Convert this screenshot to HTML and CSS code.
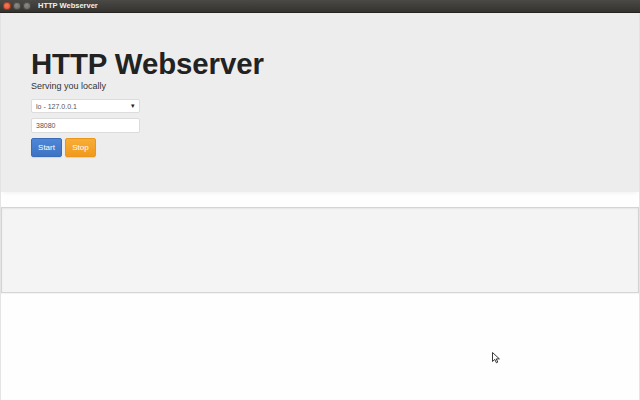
FILE: index.html
```html
<!DOCTYPE html>
<html>
<head>
<meta charset="utf-8">
<title>HTTP Webserver</title>
<link rel="stylesheet" href="styles.css">
</head>
<body>
<div class="window">
  <div class="titlebar">
    <div class="controls">
      <span class="dot close"></span>
      <span class="dot min"></span>
      <span class="dot max"></span>
    </div>
    <span class="wtitle">HTTP Webserver</span>
  </div>
  <div class="content">
    <div class="jumbotron">
      <h1 class="title">HTTP Webserver</h1>
      <p class="lead">Serving you locally</p>
      <div class="select">
        <span>lo - 127.0.0.1</span>
        <span class="caret">▾</span>
      </div>
      <div class="input">38080</div>
      <div class="buttons">
        <button class="btn btn-start">Start</button>
        <button class="btn btn-stop">Stop</button>
      </div>
    </div>
    <div class="spacer"></div>
    <div class="well"></div>
  </div>
  <svg class="cursor" width="9" height="12" viewBox="0 0 9 12">
    <path d="M0.5 0.5 L0.5 9.5 L2.8 7.4 L4.4 10.8 L5.8 10.1 L4.3 6.9 L7.4 6.9 Z" fill="#fff" stroke="#222" stroke-width="0.9" stroke-linejoin="round"/>
  </svg>
</div>
</body>
</html>
```

FILE: styles.css
```css
html, body {
  margin: 0;
  padding: 0;
  background: #fefefe;
}
.window {
  position: relative;
  width: 640px;
  height: 400px;
  overflow: hidden;
  display: flex;
  flex-direction: column;
  font-family: "Liberation Sans", Arial, sans-serif;
}
.titlebar {
  height: 13px;
  flex: 0 0 13px;
  background: linear-gradient(#4a4945, #34332f);
  display: flex;
  align-items: center;
  box-sizing: border-box;
  border-bottom: 1px solid #252420;
}
.controls {
  display: flex;
  gap: 2px;
  margin-left: 3px;
  width: 35px;
}
.dot {
  width: 8px;
  height: 8px;
  border-radius: 50%;
  box-shadow: inset 0 0 0 1px rgba(0,0,0,0.35);
}
.dot.close {
  background: radial-gradient(circle at 45% 40%, #f37b5b, #d6461f);
}
.dot.min, .dot.max {
  background: radial-gradient(circle at 45% 40%, #8c8a85, #5e5c57);
}
.wtitle {
  color: #f2f1ed;
  font-weight: bold;
  font-size: 7.5px;
  line-height: 12px;
}
.content {
  flex: 1;
  display: flex;
  flex-direction: column;
  border-left: 1px solid #e4e4e4;
  border-right: 1px solid #e4e4e4;
}
.jumbotron {
  background: #ededed;
  padding: 36px 30px 0 30px;
  height: 179px;
  box-sizing: border-box;
  display: flex;
  flex-direction: column;
  align-items: flex-start;
  box-shadow: 0 3px 4px -2px rgba(0,0,0,0.06);
}
.title {
  margin: 0;
  font-size: 29.4px;
  line-height: 30px;
  font-weight: bold;
  color: #222;
  letter-spacing: -0.1px;
}
.lead {
  margin: 2px 0 0 0;
  font-size: 9px;
  line-height: 11px;
  color: #333;
}
.select, .input {
  width: 109px;
  box-sizing: border-box;
  background: #fff;
  border: 1px solid #dcdcdc;
  border-radius: 2px;
  font-size: 7px;
  color: #555;
  padding: 0 4px;
  display: flex;
  align-items: center;
}
.select {
  margin-top: 7px;
  height: 14px;
  justify-content: space-between;
}
.caret {
  font-size: 7px;
  color: #222;
}
.input {
  margin-top: 5px;
  height: 15px;
}
.buttons {
  margin-top: 5px;
  display: flex;
  gap: 3px;
}
.btn {
  height: 19px;
  width: 31px;
  border: 1px solid transparent;
  border-radius: 2px;
  color: #fff;
  font-family: "Liberation Sans", Arial, sans-serif;
  font-size: 8px;
  padding: 0;
  box-shadow: 0 1px 1px rgba(0,0,0,0.1);
}
.btn-start {
  background: linear-gradient(#4f86d6, #3e73c4);
  border-color: #3a6bb8;
}
.btn-stop {
  background: linear-gradient(#f8ad36, #f09a1c);
  border-color: #e8961c;
}
.spacer {
  height: 15px;
  flex: 0 0 15px;
}
.well {
  height: 86px;
  flex: 0 0 86px;
  box-sizing: border-box;
  background: #f4f4f5;
  border: 1px solid #d4d4d4;
  box-shadow: inset 0 1px 2px rgba(0,0,0,0.06), 0 1px 1px rgba(0,0,0,0.04);
}
.cursor {
  position: absolute;
  left: 492px;
  top: 352px;
}
```
